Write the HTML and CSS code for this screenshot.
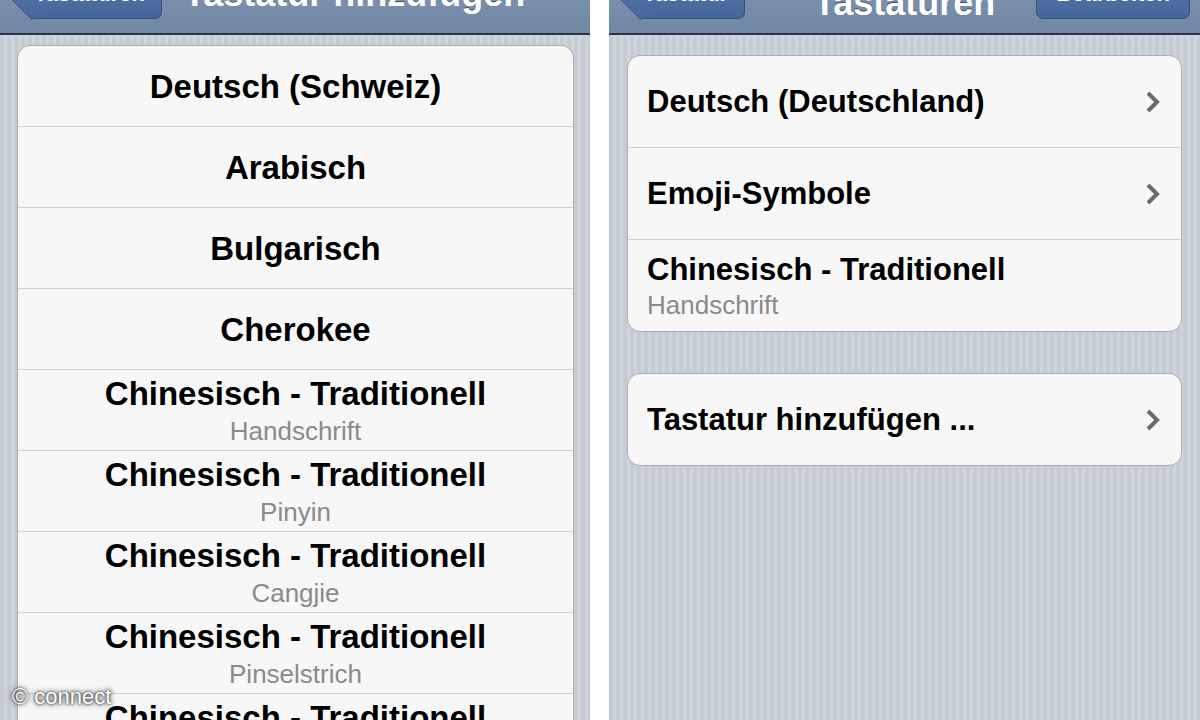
FILE: index.html
```html
<!DOCTYPE html>
<html lang="de">
<head>
  <meta charset="UTF-8">
  <meta name="viewport" content="width=device-width, initial-scale=1.0">
  <title>Tastaturen</title>
  <link rel="stylesheet" href="styles.css">
</head>
<body>

<section class="panel panel-left">
  <header class="navbar">
    <div class="nav-btn nav-back">Tastaturen</div>
    <h1 class="nav-title title-left">Tastatur hinzufügen</h1>
  </header>
  <div class="content content-left">
    <ul class="list list-centered">
      <li class="row"><span class="row-title">Deutsch (Schweiz)</span></li>
      <li class="row"><span class="row-title">Arabisch</span></li>
      <li class="row"><span class="row-title">Bulgarisch</span></li>
      <li class="row"><span class="row-title">Cherokee</span></li>
      <li class="row"><span class="row-title">Chinesisch - Traditionell</span><span class="row-sub">Handschrift</span></li>
      <li class="row"><span class="row-title">Chinesisch - Traditionell</span><span class="row-sub">Pinyin</span></li>
      <li class="row"><span class="row-title">Chinesisch - Traditionell</span><span class="row-sub">Cangjie</span></li>
      <li class="row"><span class="row-title">Chinesisch - Traditionell</span><span class="row-sub">Pinselstrich</span></li>
      <li class="row"><span class="row-title">Chinesisch - Traditionell</span><span class="row-sub">Zhuyin</span></li>
    </ul>
  </div>
</section>

<section class="panel panel-right">
  <header class="navbar">
    <div class="nav-side">
      <div class="nav-btn nav-back">Tastatur</div>
    </div>
    <h1 class="nav-title title-right">Tastaturen</h1>
    <div class="nav-side nav-side-end">
      <div class="nav-btn nav-edit">Bearbeiten</div>
    </div>
  </header>
  <div class="content content-right">
    <ul class="list list-left">
      <li class="row row-link">
        <span class="row-title">Deutsch (Deutschland)</span>
        <svg class="chevron" width="16" height="24" viewBox="0 0 16 24"><path d="M3 3 L12 12 L3 21" fill="none" stroke="#6b6b6b" stroke-width="4"/></svg>
      </li>
      <li class="row row-link">
        <span class="row-title">Emoji-Symbole</span>
        <svg class="chevron" width="16" height="24" viewBox="0 0 16 24"><path d="M3 3 L12 12 L3 21" fill="none" stroke="#6b6b6b" stroke-width="4"/></svg>
      </li>
      <li class="row row-double">
        <span class="row-title">Chinesisch - Traditionell</span>
        <span class="row-sub">Handschrift</span>
      </li>
    </ul>
    <ul class="list list-left list-add">
      <li class="row row-link">
        <span class="row-title">Tastatur hinzufügen ...</span>
        <svg class="chevron" width="16" height="24" viewBox="0 0 16 24"><path d="M3 3 L12 12 L3 21" fill="none" stroke="#6b6b6b" stroke-width="4"/></svg>
      </li>
    </ul>
  </div>
</section>

<div class="watermark">© connect</div>

</body>
</html>
```

FILE: styles.css
```css
body {
  margin: 0;
  height: 720px;
  overflow: hidden;
  display: flex;
  gap: 19px;
  background-color: #FFFFFF;
  font-family: "Liberation Sans", Arial, sans-serif;
  position: relative;
}
.panel {
  display: flex;
  flex-direction: column;
  height: 720px;
  background: repeating-linear-gradient(90deg, #c4cbd3 0, #c4cbd3 4px, #ced4db 4px, #ced4db 7px);
}
.panel-left {
  width: 590px;
}
.panel-right {
  flex: 1;
}

/* Navigationsleiste */
.navbar {
  height: 33px;
  flex-shrink: 0;
  display: flex;
  align-items: flex-end;
  background: linear-gradient(#7a8fab, #6f86a4);
  border-bottom: 2px solid #2c3541;
  overflow: hidden;
}
.nav-side {
  flex: 1 1 0;
  display: flex;
  align-items: flex-end;
}
.nav-side-end {
  justify-content: flex-end;
}
.nav-btn {
  position: relative;
  z-index: 0;
  height: 44px;
  box-sizing: border-box;
  display: flex;
  align-items: flex-end;
  margin-bottom: 14px;
  padding-bottom: 13px;
  background: linear-gradient(#5878aa, #45669b);
  border: 1px solid #34507b;
  border-radius: 7px;
  color: #FFFFFF;
  font-size: 22px;
  line-height: 22px;
  font-weight: bold;
  text-shadow: 0 -1px 0 rgba(0, 0, 0, 0.4);
  white-space: nowrap;
}
.nav-back {
  margin-left: 32px;
  padding-left: 2px;
  padding-right: 16px;
  border-left: none;
  border-radius: 0 7px 7px 0;
}
.nav-back::before {
  content: "";
  position: absolute;
  z-index: -1;
  left: -16px;
  top: 6px;
  width: 31px;
  height: 31px;
  background: linear-gradient(135deg, #5878aa, #45669b);
  border-left: 1px solid #34507b;
  border-bottom: 1px solid #34507b;
  border-radius: 0 0 0 4px;
  transform: rotate(45deg);
}
.nav-edit {
  margin-right: 10px;
  padding-left: 19px;
  padding-right: 19px;
}
.nav-title {
  margin: 0;
  color: #FFFFFF;
  font-size: 36px;
  line-height: 36px;
  font-weight: bold;
  text-shadow: 0 -1px 0 rgba(0, 0, 0, 0.45);
  white-space: nowrap;
}
.title-left {
  margin-left: 22px;
  margin-bottom: 21px;
}
.title-right {
  margin-bottom: 12px;
}

/* Listen */
.content-left {
  padding: 10px 16px 0 17px;
}
.content-right {
  padding: 20px 18px 0 18px;
}
.list {
  list-style: none;
  margin: 0;
  padding: 0;
  background-color: #f7f7f7;
  border: 1px solid #a9acb0;
  border-radius: 13px;
}
.row {
  display: flex;
  border-top: 1px solid #d2d2d2;
}
.row:first-child {
  border-top: none;
}
.row-title {
  color: #000000;
  font-weight: bold;
  white-space: nowrap;
}
.row-sub {
  color: #8a8a8a;
  font-size: 26px;
  line-height: 26px;
}

.list-centered .row {
  height: 80px;
  flex-direction: column;
  align-items: center;
  justify-content: center;
}
.list-centered .row-title {
  font-size: 33px;
  line-height: 33px;
}
.list-centered .row-sub {
  margin-top: 8px;
}

.list-left .row {
  height: 91px;
  padding: 0 20px 0 19px;
}
.list-left .row-title {
  font-size: 31px;
  line-height: 31px;
}
.row-link {
  align-items: center;
  justify-content: space-between;
}
.row-double {
  flex-direction: column;
  justify-content: center;
}
.row-double .row-sub {
  margin-top: 7px;
}
.list-add {
  margin-top: 41px;
}

.watermark {
  position: absolute;
  left: 12px;
  top: 686px;
  color: #FFFFFF;
  font-size: 22px;
  line-height: 22px;
  text-shadow: 0 0 2px #333333, 0 0 4px #555555, 0 0 6px rgba(0, 0, 0, 0.5);
}
```
